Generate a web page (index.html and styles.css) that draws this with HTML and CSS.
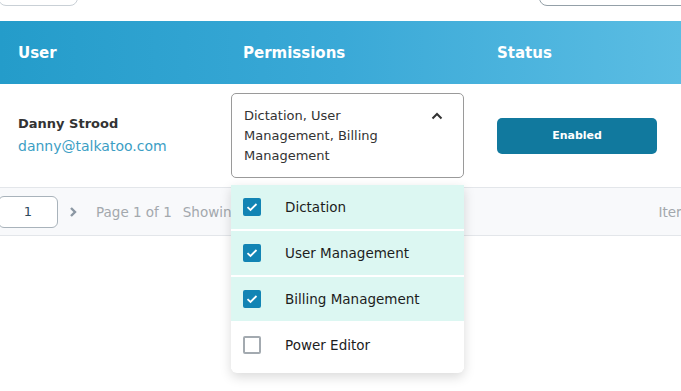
FILE: index.html
```html
<!DOCTYPE html>
<html lang="en">
<head>
  <meta charset="UTF-8">
  <title>Users</title>
  <link rel="stylesheet" href="styles.css">
</head>
<body>
  <div class="toolbar">
    <div class="search-box"></div>
    <div class="filter-box"></div>
  </div>
  <div class="users-table">
    <div class="table-head">
      <div class="th">User</div>
      <div class="th">Permissions</div>
      <div class="th">Status</div>
    </div>
    <div class="table-row">
      <div class="cell user-cell">
        <div class="user-name">Danny Strood</div>
        <a class="user-email" href="#">danny@talkatoo.com</a>
      </div>
      <div class="cell perm-cell">
        <div class="perm-select">
          <span class="perm-value">Dictation, User Management, Billing Management</span>
          <svg class="chevron-up" width="12" height="8" viewBox="0 0 12 8"><path d="M1.5 6.5 L6 2 L10.5 6.5" fill="none" stroke="#333" stroke-width="2"/></svg>
        </div>
        <ul class="perm-menu">
          <li class="perm-option checked"><span class="check-box"><svg width="12" height="10" viewBox="0 0 12 10"><path d="M1.5 5.2 L4.5 8 L10.5 2" fill="none" stroke="#fff" stroke-width="1.8"/></svg></span>Dictation</li>
          <li class="perm-option checked"><span class="check-box"><svg width="12" height="10" viewBox="0 0 12 10"><path d="M1.5 5.2 L4.5 8 L10.5 2" fill="none" stroke="#fff" stroke-width="1.8"/></svg></span>User Management</li>
          <li class="perm-option checked"><span class="check-box"><svg width="12" height="10" viewBox="0 0 12 10"><path d="M1.5 5.2 L4.5 8 L10.5 2" fill="none" stroke="#fff" stroke-width="1.8"/></svg></span>Billing Management</li>
          <li class="perm-option"><span class="check-box"></span>Power Editor</li>
        </ul>
      </div>
      <div class="cell status-cell">
        <button class="status-btn">Enabled</button>
      </div>
    </div>
    <div class="table-footer">
      <input class="page-input" type="text" value="1">
      <svg class="chevron-right" width="10" height="12" viewBox="0 0 10 12"><path d="M3 2 L7 6 L3 10" fill="none" stroke="#8b97a3" stroke-width="2.4"/></svg>
      <span class="page-info">Page 1 of 1</span>
      <span class="page-info showing">Showing 1 to 1 of 1</span>
      <span class="items-label">Items per page</span>
    </div>
  </div>
</body>
</html>
```

FILE: styles.css
```css
body {
  margin: 0;
  min-height: 391px;
  font-family: 'DejaVu Sans', 'Open Sans', sans-serif;
  background: #fff;
  color: #222;
}
.toolbar {
  height: 21px;
  display: flex;
  justify-content: space-between;
  overflow: hidden;
}
.search-box {
  width: 78px;
  height: 30px;
  margin: -26px 0 0 -2px;
  border: 1px solid #c9d0d6;
  border-radius: 8px;
}
.filter-box {
  width: 160px;
  height: 30px;
  margin: -26px -20px 0 0;
  border: 1px solid #94a0a8;
  border-radius: 8px;
}
.table-head {
  height: 63px;
  display: grid;
  grid-template-columns: 225px 254px 1fr;
  align-items: center;
  background: linear-gradient(90deg, #249cca 0%, #3aa9d7 50%, #5bbde3 100%);
}
.th {
  padding-left: 18px;
  color: #fff;
  font-weight: 700;
  font-size: 15px;
}
.table-row {
  height: 103px;
  display: grid;
  grid-template-columns: 225px 254px 1fr;
  align-items: center;
}
.cell {
  padding-left: 18px;
}
.user-name {
  font-size: 13px;
  font-weight: 600;
  color: #333;
  margin-bottom: 5px;
}
.user-email {
  font-size: 14px;
  color: #3c9ec4;
  text-decoration: none;
}
.perm-cell {
  position: relative;
  padding-left: 6px;
  align-self: start;
  padding-top: 9px;
}
.perm-select {
  width: 233px;
  height: 85px;
  box-sizing: border-box;
  border: 1px solid #9a9a9a;
  border-radius: 5px;
  padding: 12px 12px 0 12px;
  display: flex;
  align-items: flex-start;
  gap: 14px;
}
.perm-value {
  flex: 1;
  font-size: 13px;
  line-height: 20px;
  color: #333;
}
.chevron-up {
  margin-top: 6px;
  margin-right: 8px;
}
.perm-menu {
  position: absolute;
  top: 101px;
  left: 6px;
  width: 233px;
  margin: 0;
  padding: 0 0 4px 0;
  list-style: none;
  background: #fff;
  border-radius: 0 0 6px 6px;
  box-shadow: 0 4px 12px rgba(0, 0, 0, 0.15);
  z-index: 5;
}
.perm-option {
  height: 44px;
  display: flex;
  align-items: center;
  gap: 24px;
  padding-left: 12px;
  font-size: 13.5px;
  color: #1d1d1d;
  border-bottom: 2px solid #fff;
}
.perm-option.checked {
  background: #dcf7f2;
}
.check-box {
  width: 18px;
  height: 18px;
  box-sizing: border-box;
  border: 2px solid #a3aab0;
  border-radius: 2px;
  display: flex;
  align-items: center;
  justify-content: center;
}
.checked .check-box {
  background: #1284b4;
  border-color: #1284b4;
}
.status-btn {
  width: 160px;
  height: 36px;
  border: none;
  border-radius: 5px;
  background: #11799e;
  color: #fff;
  font-family: inherit;
  font-size: 11px;
  font-weight: 700;
}
.table-footer {
  height: 47px;
  display: flex;
  align-items: center;
  background: #f8f9fb;
  border-top: 1px solid #e3e6ea;
  border-bottom: 1px solid #e3e6ea;
  white-space: nowrap;
  overflow: hidden;
}
.page-input {
  width: 60px;
  height: 32px;
  flex-shrink: 0;
  box-sizing: border-box;
  margin-left: -2px;
  border: 1px solid #a9b3bb;
  border-radius: 6px;
  text-align: center;
  font-family: inherit;
  font-size: 13px;
  color: #2e4a5e;
}
.chevron-right {
  flex-shrink: 0;
  margin-left: 10px;
}
.page-info {
  margin-left: 18px;
  font-size: 13.5px;
  color: #a3a8ad;
}
.page-info.showing {
  margin-left: 11px;
}
.items-label {
  margin-left: auto;
  margin-right: -80px;
  font-size: 13.5px;
  color: #a3a8ad;
}
```
